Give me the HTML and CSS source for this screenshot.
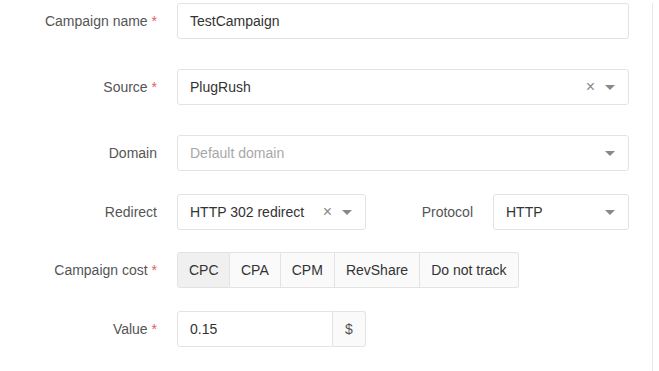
FILE: index.html
```html
<!DOCTYPE html>
<html>
<head>
    <title>Campaign</title>
    <link rel="stylesheet" href="styles.css">
</head>
<body>
    <div class="panel">
        <div class="row spaced">
            <label class="label">Campaign name <span class="req">*</span></label>
            <div class="field">TestCampaign</div>
        </div>
        <div class="row spaced">
            <label class="label">Source <span class="req">*</span></label>
            <div class="field select">
                <span class="value">PlugRush</span>
                <span class="clear">&times;</span>
                <span class="caret"></span>
            </div>
        </div>
        <div class="row">
            <label class="label">Domain</label>
            <div class="field select">
                <span class="value placeholder">Default domain</span>
                <span class="caret"></span>
            </div>
        </div>
        <div class="row tight">
            <label class="label">Redirect</label>
            <div class="field select redirect">
                <span class="value">HTTP 302 redirect</span>
                <span class="clear">&times;</span>
                <span class="caret"></span>
            </div>
            <label class="label sub-label">Protocol</label>
            <div class="field select protocol">
                <span class="value">HTTP</span>
                <span class="caret"></span>
            </div>
        </div>
        <div class="row">
            <label class="label">Campaign cost <span class="req">*</span></label>
            <div class="btn-group">
                <button class="active">CPC</button>
                <button>CPA</button>
                <button>CPM</button>
                <button>RevShare</button>
                <button>Do not track</button>
            </div>
        </div>
        <div class="row">
            <label class="label">Value <span class="req">*</span></label>
            <div class="input-group">
                <div class="field value-input">0.15</div>
                <span class="addon">$</span>
            </div>
        </div>
    </div>
</body>
</html>
```

FILE: styles.css
```css
body {
    font-family: 'Liberation Sans', Arial, sans-serif;
    font-size: 14px;
    background-color: #fff;
    color: #333;
    margin: 0;
}

.panel {
    width: 653px;
    height: 368px;
    margin-top: 3px;
    border-right: 1px solid #e8e8e8;
    box-sizing: border-box;
}

.row {
    display: flex;
    align-items: center;
    height: 36px;
    margin-bottom: 23px;
}

.row.spaced {
    margin-bottom: 30px;
}

.row.tight {
    margin-bottom: 22px;
}

.label {
    width: 157px;
    margin-right: 20px;
    text-align: right;
    color: #555;
    flex-shrink: 0;
}

.req {
    color: #e06060;
}

.field {
    box-sizing: border-box;
    width: 452px;
    height: 36px;
    border: 1px solid #e3e3e3;
    border-radius: 3px;
    padding: 0 12px;
    display: flex;
    align-items: center;
    color: #333;
}

.select .value {
    flex: 1;
}

.placeholder {
    color: #a8a8a8;
}

.clear {
    color: #888;
    font-size: 16px;
    margin-right: 10px;
}

.caret {
    width: 0;
    height: 0;
    border-left: 5px solid transparent;
    border-right: 5px solid transparent;
    border-top: 5px solid #888;
    margin-right: 1px;
}

.redirect {
    width: 189px;
}

.sub-label {
    width: 107px;
}

.protocol {
    width: 136px;
}

.btn-group {
    display: flex;
    height: 36px;
}

.btn-group button {
    font-family: inherit;
    font-size: 14px;
    color: #333;
    background: #fafafa;
    border: 1px solid #e3e3e3;
    border-left: none;
    padding: 0 11px;
    height: 36px;
    cursor: pointer;
}

.btn-group button:first-child {
    border-left: 1px solid #e3e3e3;
    border-radius: 3px 0 0 3px;
    width: 53px;
}

.btn-group button:last-child {
    border-radius: 0 3px 3px 0;
}

.btn-group button.active {
    background: #f0f0f0;
}

.input-group {
    display: flex;
    height: 36px;
}

.value-input {
    width: 156px;
    border-radius: 3px 0 0 3px;
}

.addon {
    box-sizing: border-box;
    width: 33px;
    height: 36px;
    border: 1px solid #e3e3e3;
    border-left: none;
    border-radius: 0 3px 3px 0;
    background: #fafafa;
    display: flex;
    align-items: center;
    justify-content: center;
    color: #555;
}
```
